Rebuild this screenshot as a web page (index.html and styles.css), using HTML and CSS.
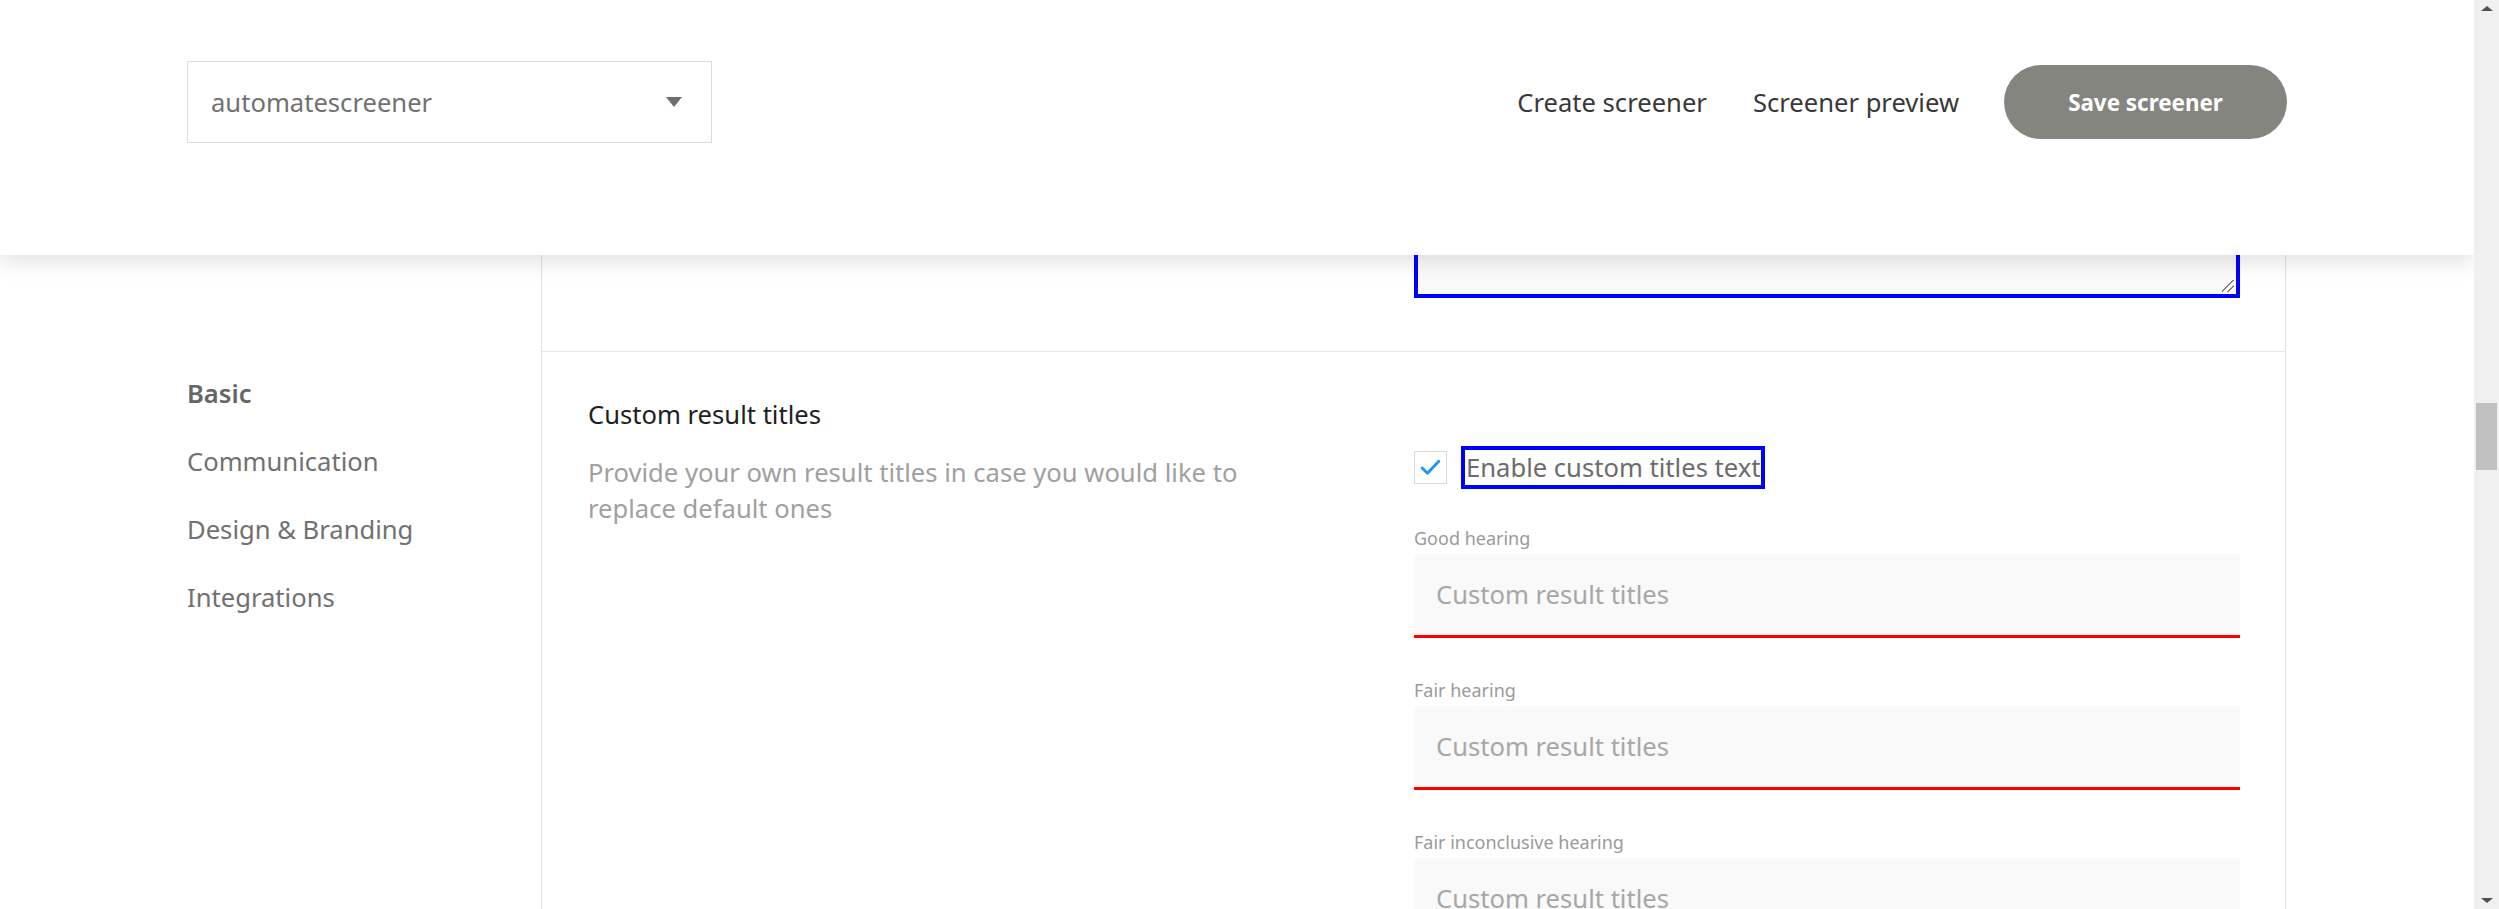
FILE: index.html
```html
<!DOCTYPE html>
<html lang="en">
<head>
<meta charset="utf-8">
<title>Screener settings</title>
<link rel="stylesheet" href="styles.css">
</head>
<body>
<div class="app">
  <div class="main">
    <header class="header">
      <div class="select">
        <span class="select-value">automatescreener</span>
        <span class="select-arrow"></span>
      </div>
      <nav class="actions">
        <a class="action-link">Create screener</a>
        <a class="action-link">Screener preview</a>
        <button class="save-btn">Save screener</button>
      </nav>
    </header>
    <div class="content">
      <aside class="sidebar">
        <ul class="side-nav">
          <li class="side-item active">Basic</li>
          <li class="side-item">Communication</li>
          <li class="side-item">Design &amp; Branding</li>
          <li class="side-item">Integrations</li>
        </ul>
      </aside>
      <section class="card">
        <div class="section section-prev">
          <div></div>
          <div class="textarea-tail"><span class="resize-grip"></span></div>
        </div>
        <div class="section">
          <div class="section-info">
            <h3 class="section-title">Custom result titles</h3>
            <p class="section-desc">Provide your own result titles in case you would like to replace default ones</p>
          </div>
          <div class="section-fields">
            <div class="check-row">
              <span class="checkbox">
                <svg viewBox="0 0 24 24" width="25" height="25"><path d="M4 12.5l5 5L20 6" fill="none" stroke="#2196f3" stroke-width="2.8" stroke-linecap="round" stroke-linejoin="round"/></svg>
              </span>
              <span class="check-label">Enable custom titles text</span>
            </div>
            <div class="field">
              <label class="field-label">Good hearing</label>
              <input class="field-input invalid" placeholder="Custom result titles">
            </div>
            <div class="field">
              <label class="field-label">Fair hearing</label>
              <input class="field-input invalid" placeholder="Custom result titles">
            </div>
            <div class="field">
              <label class="field-label">Fair inconclusive hearing</label>
              <input class="field-input" placeholder="Custom result titles">
            </div>
          </div>
        </div>
      </section>
    </div>
  </div>
  <div class="scrollbar">
    <span class="sb-arrow sb-up"></span>
    <div class="sb-track">
      <span class="sb-thumb"></span>
    </div>
    <span class="sb-arrow sb-down"></span>
  </div>
</div>
</body>
</html>
```

FILE: styles.css
```css
* { box-sizing: border-box; }

html, body {
  margin: 0;
  height: 909px;
  overflow: hidden;
  background: #fff;
  font-family: "Noto Sans", "Open Sans", sans-serif;
}

.app {
  display: flex;
  height: 909px;
}

.main {
  flex: 1;
  display: flex;
  flex-direction: column;
  overflow: hidden;
  min-width: 0;
}

/* Header */
.header {
  position: relative;
  z-index: 2;
  flex-shrink: 0;
  height: 255px;
  background: #fff;
  box-shadow: 0 6px 22px rgba(0, 0, 0, 0.13);
  display: flex;
  align-items: flex-start;
  padding: 61px 187px 0 187px;
}

.select {
  width: 525px;
  height: 82px;
  border: 1px solid #dcdcdc;
  display: flex;
  align-items: center;
  justify-content: space-between;
  padding: 0 29px 0 23px;
}

.select-value {
  font-size: 25.6px;
  color: #717171;
}

.select-arrow {
  width: 0;
  height: 0;
  border-left: 8px solid transparent;
  border-right: 8px solid transparent;
  border-top: 10px solid #6e6e6e;
}

.actions {
  margin-left: auto;
  height: 82px;
  display: flex;
  align-items: center;
  gap: 46px;
}

.action-link {
  font-size: 25.6px;
  color: #383838;
  text-decoration: none;
}

.save-btn {
  margin-left: -1px;
  width: 283px;
  height: 74px;
  border: 0;
  border-radius: 37px;
  background: #858580;
  color: #fff;
  font-family: "Noto Sans", "Open Sans", sans-serif;
  font-size: 22.4px;
  font-weight: 700;
}

/* Content */
.content {
  flex: 1;
  display: flex;
  margin: 0 188px 0 187px;
  min-height: 0;
}

.sidebar {
  width: 354px;
  flex-shrink: 0;
}

.side-nav {
  list-style: none;
  margin: 0;
  padding: 121px 0 0;
  display: flex;
  flex-direction: column;
  gap: 32px;
}

.side-item {
  font-size: 25.6px;
  line-height: 36px;
  color: #717171;
}

.side-item.active {
  font-weight: 600;
  color: #666;
}

.card {
  flex: 1;
  border-left: 1px solid #e2e2e2;
  border-right: 1px solid #e2e2e2;
}

.section {
  display: grid;
  grid-template-columns: 1fr 1fr;
  padding: 45px 45px 0 46px;
}

.section-prev {
  padding-top: 0;
  padding-bottom: 53px;
  border-bottom: 1px solid #e6e6e6;
}

.textarea-tail {
  position: relative;
  height: 43px;
  background: #fafafa;
  border: 4px solid #0000ff;
  border-top: 0;
}

.resize-grip {
  position: absolute;
  right: 2px;
  bottom: 2px;
  width: 12px;
  height: 12px;
  background: linear-gradient(135deg, transparent 45%, #777 46%, #777 52%, transparent 53%, transparent 70%, #777 71%, #777 77%, transparent 78%);
}

.section-title {
  margin: 0;
  font-size: 25.6px;
  line-height: 36px;
  font-weight: 400;
  color: #1e1e1e;
}

.section-desc {
  margin: 22px 0 0;
  max-width: 700px;
  font-size: 25.6px;
  line-height: 36px;
  color: #a0a0a0;
}

.section-fields {
  padding-top: 53px;
}

.check-row {
  display: flex;
  align-items: center;
  gap: 18px;
}

.checkbox {
  width: 33px;
  height: 33px;
  border: 1px solid #dadada;
  display: flex;
  align-items: center;
  justify-content: center;
}

.check-label {
  font-size: 25.6px;
  line-height: 35px;
  color: #6c6c6c;
  outline: 4px solid #0000ff;
  padding: 0 1px;
}

.field {
  display: flex;
  flex-direction: column;
}

.check-row + .field {
  margin-top: 41px;
}

.field + .field {
  margin-top: 40px;
}

.field-label {
  font-size: 18px;
  line-height: 24px;
  color: #9a9a9a;
  margin-bottom: 4px;
}

.field-input {
  height: 84px;
  border: 0;
  border-bottom: 3px solid transparent;
  background: #f9f9f9;
  padding: 0 22px;
  font-family: "Noto Sans", "Open Sans", sans-serif;
  font-size: 25.6px;
  color: #333;
  outline: none;
}

.field-input::placeholder {
  color: #a7a7a7;
}

.field-input.invalid {
  border-bottom-color: #ff0000;
}

/* Scrollbar */
.scrollbar {
  width: 25px;
  flex-shrink: 0;
  background: #f0f0f0;
  display: flex;
  flex-direction: column;
  align-items: center;
}

.sb-arrow {
  height: 17px;
  display: flex;
  align-items: center;
}

.sb-up::before,
.sb-down::before {
  content: "";
  border-left: 6px solid transparent;
  border-right: 6px solid transparent;
}

.sb-up::before { border-bottom: 5px solid #505050; }
.sb-down::before { border-top: 5px solid #505050; }

.sb-track {
  flex: 1;
  width: 100%;
  padding: 386px 2px 0;
}

.sb-thumb {
  display: block;
  height: 67px;
  background: #c1c1c1;
}
```
